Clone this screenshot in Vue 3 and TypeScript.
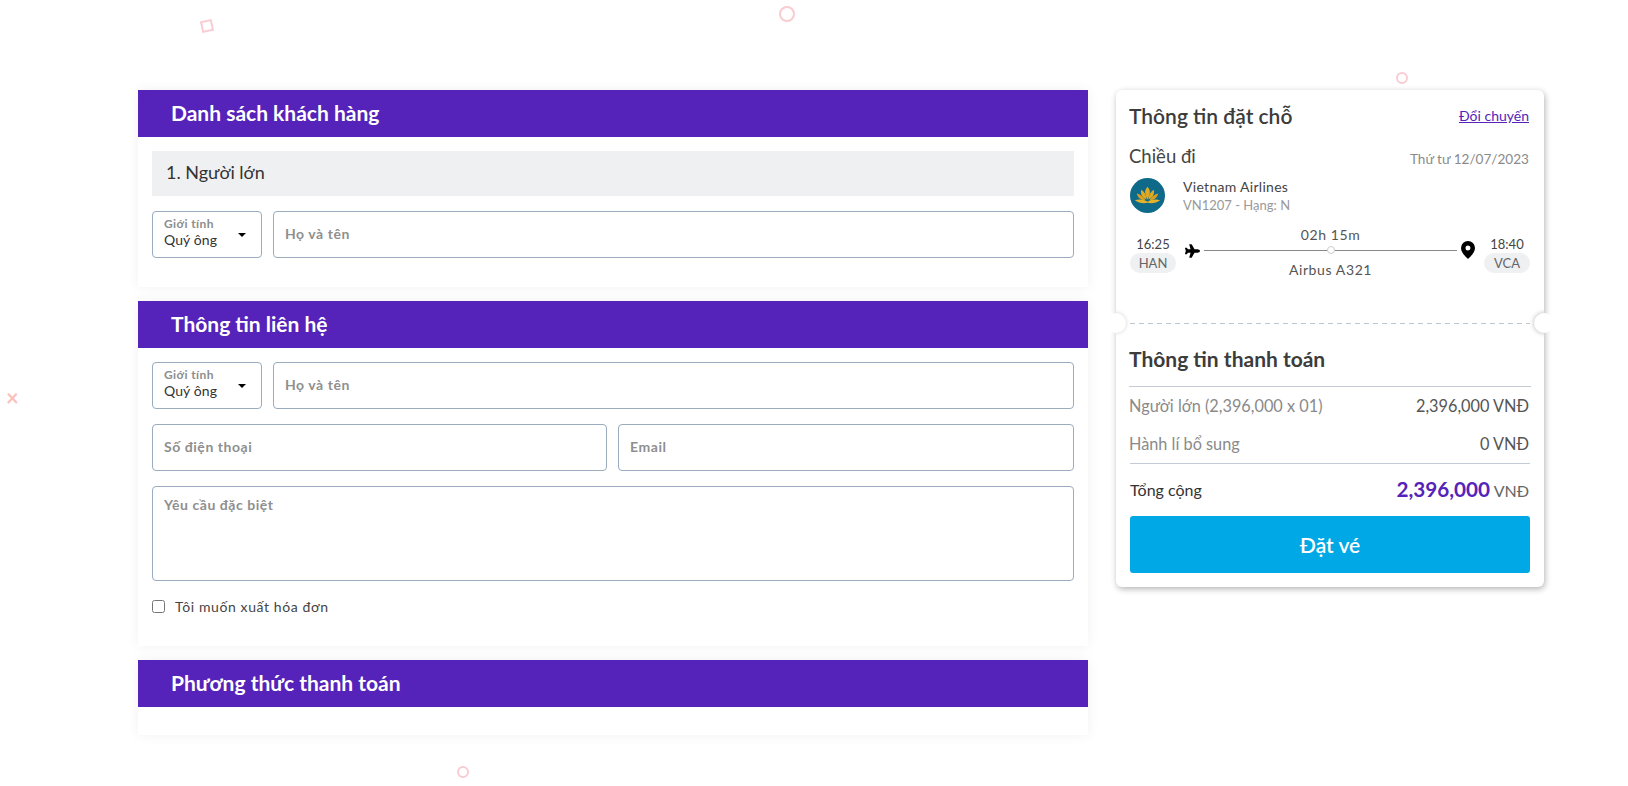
<script setup lang="ts">
type Shape = { kind: string; left: number; top: number };

const shapes: Shape[] = [
  { kind: "square", left: 201, top: 20 },
  { kind: "ring big", left: 779, top: 6 },
  { kind: "ring", left: 1396, top: 72 },
  { kind: "ring", left: 457, top: 766 },
];

const fees = [
  { label: "Người lớn (2,396,000 x 01)", value: "2,396,000 VNĐ" },
  { label: "Hành lí bổ sung", value: "0 VNĐ" },
];
</script>

<template>
  <div class="page">
    <span
      v-for="s in shapes"
      :key="s.left"
      class="shape"
      :class="s.kind"
      :style="{ left: s.left + 'px', top: s.top + 'px' }"
    ></span>
    <span class="shape cross">×</span>

    <main class="left">
      <section class="panel">
        <h2 class="panel-title">Danh sách khách hàng</h2>
        <div class="panel-body first">
          <div class="pax">1. Người lớn</div>
          <div class="row">
            <div class="select">
              <label>Giới tính</label>
              <span>Quý ông</span>
              <i class="caret"></i>
            </div>
            <input class="field grow" placeholder="Họ và tên" />
          </div>
        </div>
      </section>

      <section class="panel">
        <h2 class="panel-title">Thông tin liên hệ</h2>
        <div class="panel-body contact">
          <div class="row">
            <div class="select">
              <label>Giới tính</label>
              <span>Quý ông</span>
              <i class="caret"></i>
            </div>
            <input class="field grow" placeholder="Họ và tên" />
          </div>
          <div class="row">
            <input class="field half" placeholder="Số điện thoại" />
            <input class="field half" placeholder="Email" />
          </div>
          <textarea class="field note" placeholder="Yêu cầu đặc biệt"></textarea>
          <label class="invoice">
            <input type="checkbox" />
            <span>Tôi muốn xuất hóa đơn</span>
          </label>
        </div>
      </section>

      <section class="panel">
        <h2 class="panel-title">Phương thức thanh toán</h2>
        <div class="panel-body empty"></div>
      </section>
    </main>

    <aside class="ticket">
      <div class="ticket-top">
        <div class="between head">
          <h3>Thông tin đặt chỗ</h3>
          <a href="#">Đổi chuyến</a>
        </div>
        <div class="between way">
          <span class="way-name">Chiều đi</span>
          <span class="date">Thứ tư 12/07/2023</span>
        </div>
        <div class="airline">
          <svg class="logo" viewBox="0 0 36 36">
            <circle cx="18" cy="18" r="18" fill="#0f6a8a" />
            <path d="M18 9c3 3 3.500 7 0 13c-3.500-6-3-10 0-13z" fill="#e0a922" />
            <path d="M11.500 12c3 1.500 5 5 5.500 10c-4-1.500-6.500-5-5.500-10zM24.500 12c-3 1.500-5 5-5.500 10c4-1.500 6.500-5 5.500-10z" fill="#e0a922" />
            <path d="M7 16c3 .5 7 3 9 7c-4 .5-8-2.500-9-7zM29 16c-3 .5-7 3-9 7c4 .5 8-2.500 9-7z" fill="#d9a020" />
            <path d="M5 23c4-1.500 9-1 13 1.500c4-2.500 9-3 13-1.500c-4 3-9 3.500-13 2.500c-4 1-9 .5-13-2.500z" fill="#e6b32a" />
          </svg>
          <div>
            <div class="air-name">Vietnam Airlines</div>
            <div class="air-code">VN1207 - Hạng: N</div>
          </div>
        </div>
        <div class="route">
          <div class="stop">
            <span class="time">16:25</span>
            <span class="code">HAN</span>
          </div>
          <svg class="plane" viewBox="0 0 576 512">
            <path d="M480 192H365.710L260.610 8.060A16.014 16.014 0 0 0 246.710 0h-65.500c-10.630 0-18.300 10.170-15.380 20.390L214.860 192H112l-43.200-57.600c-3.020-4.030-7.770-6.400-12.800-6.400H16.010C5.600 128-2.040 137.780.490 147.880L32 256 .490 364.120C-2.040 374.220 5.600 384 16.010 384H56c5.040 0 9.780-2.370 12.800-6.400L112 320h102.860l-49.030 171.600c-2.920 10.220 4.750 20.400 15.380 20.400h65.500c5.740 0 11.040-3.080 13.890-8.060L365.710 320H480c35.350 0 96-28.650 96-64s-60.650-64-96-64z" />
          </svg>
          <div class="track">
            <span class="dur">02h 15m</span>
            <div class="line"><i></i></div>
            <span class="craft">Airbus A321</span>
          </div>
          <svg class="pin" viewBox="0 0 14 18">
            <path d="M7 0a7 7 0 0 0-7 7c0 4.500 5 9.200 7 11c2-1.800 7-6.500 7-11a7 7 0 0 0-7-7zm0 9.500a2.500 2.500 0 1 1 0-5a2.500 2.500 0 0 1 0 5z" />
          </svg>
          <div class="stop">
            <span class="time">18:40</span>
            <span class="code">VCA</span>
          </div>
        </div>
      </div>

      <div class="tear">
        <i class="notch l"></i>
        <i class="notch r"></i>
      </div>

      <div class="ticket-bottom">
        <h3 class="pay-title">Thông tin thanh toán</h3>
        <div class="fees">
          <div v-for="f in fees" :key="f.label" class="between fee">
            <span class="fee-label">{{ f.label }}</span>
            <span class="fee-value">{{ f.value }}</span>
          </div>
        </div>
        <div class="between total">
          <span class="total-label">Tổng cộng</span>
          <span class="total-value"><b>2,396,000</b> VNĐ</span>
        </div>
        <button class="book">Đặt vé</button>
      </div>
    </aside>
  </div>
</template>

<style scoped>
.page {
  position: relative;
  display: flex;
  align-items: flex-start;
  gap: 28px;
  height: 786px;
  box-sizing: border-box;
  padding: 90px 84px 0 138px;
  font-family: "Lato", "Noto Sans", sans-serif;
  color: #333;
  overflow: hidden;
}

.shape {
  position: absolute;
  box-sizing: border-box;
}
.square {
  width: 12px;
  height: 12px;
  border: 2px solid #f8ccd1;
  transform: rotate(-12deg);
}
.ring {
  width: 12px;
  height: 12px;
  border: 2.500px solid #f8ccd1;
  border-radius: 50%;
}
.big {
  width: 16px;
  height: 16px;
}
.cross {
  left: 6px;
  top: 388px;
  font-size: 22px;
  font-weight: 700;
  line-height: 20px;
  color: #f9c0bc;
}

.left {
  width: 950px;
  display: flex;
  flex-direction: column;
  gap: 14px;
}

.panel {
  background: #fff;
  box-shadow: 0 0 12px rgba(0, 0, 0, 0.06);
}
.panel-title {
  margin: 0;
  height: 47px;
  padding-left: 33px;
  background: #5523b9;
  color: #fff;
  font-size: 21px;
  font-weight: 700;
  line-height: 46px;
}
.panel-body {
  padding: 14px;
}
.first {
  height: 150px;
  box-sizing: border-box;
}
.contact {
  height: 298px;
  box-sizing: border-box;
}
.empty {
  height: 28px;
  padding: 0;
}

.pax {
  height: 45px;
  padding-left: 14px;
  margin-bottom: 15px;
  background: #eff0f2;
  font-size: 18px;
  line-height: 43px;
}
.row {
  display: flex;
  gap: 11px;
  margin-bottom: 15px;
}
.select {
  position: relative;
  width: 110px;
  height: 47px;
  box-sizing: border-box;
  flex: none;
  padding: 4px 11px;
  border: 1px solid #9aacbd;
  border-radius: 4px;
  background: #fff;
}
.select label {
  display: block;
  color: #8d8d8d;
  font-size: 12px;
  font-weight: 700;
  letter-spacing: 0.4px;
  line-height: 15px;
}
.select span {
  display: block;
  font-size: 14px;
  letter-spacing: 0.1px;
  line-height: 18px;
}
.caret {
  position: absolute;
  right: 15px;
  top: 21px;
  border: 4px solid transparent;
  border-top-color: #000;
  border-bottom-width: 0;
}
.field {
  height: 47px;
  box-sizing: border-box;
  padding: 0 11px 2px;
  border: 1px solid #9aacbd;
  border-radius: 4px;
  background: #fff;
  font-family: inherit;
  font-size: 14px;
  letter-spacing: 0.55px;
  outline: none;
}
.field::placeholder {
  color: #8f8f8f;
  font-weight: 700;
  opacity: 1;
}
.grow {
  flex: 1;
}
.half {
  flex: 1;
  width: 0;
}
.half:first-child {
  flex: none;
  width: 455px;
}
.note {
  display: block;
  width: 100%;
  height: 95px;
  padding-top: 9px;
  resize: none;
}
.invoice {
  display: flex;
  align-items: center;
  gap: 10px;
  margin-top: 17px;
  color: #444;
  font-size: 14px;
  letter-spacing: 0.6px;
}
.invoice input {
  width: 13px;
  height: 13px;
  margin: 0;
}

.ticket {
  width: 428px;
  flex: none;
  border-radius: 6px;
  background: #fff;
  box-shadow: 1px 2px 6px rgba(0, 0, 0, 0.3);
}
.ticket-top {
  height: 233px;
  box-sizing: border-box;
  padding: 12px 15px 0 13px;
}
.between {
  display: flex;
  justify-content: space-between;
  align-items: center;
}
.head h3 {
  margin: 0;
  color: #3c3c3c;
  font-size: 21px;
  font-weight: 600;
  line-height: 27px;
}
.head a {
  color: #5523b9;
  font-size: 14px;
}
.way {
  margin-top: 16px;
}
.way-name {
  color: #444;
  font-size: 18.500px;
}
.date {
  margin-top: 6px;
  color: #8a8a8a;
  font-size: 13.600px;
}
.airline {
  display: flex;
  align-items: center;
  gap: 18px;
  margin-top: 10px;
  margin-left: 1px;
}
.logo {
  width: 35px;
  height: 35px;
}
.air-name {
  color: #444;
  font-size: 14px;
  letter-spacing: 0.3px;
  line-height: 19px;
}
.air-code {
  color: #999;
  font-size: 13px;
  line-height: 18px;
}
.route {
  display: flex;
  align-items: center;
  margin: 12px -1px 0 1px;
}
.stop {
  display: flex;
  flex-direction: column;
  align-items: center;
  width: 46px;
  margin-top: 4px;
}
.time {
  color: #444;
  font-size: 13px;
  line-height: 18px;
}
.code {
  width: 100%;
  background: #eff0f2;
  border-radius: 10px;
  color: #666;
  font-size: 13px;
  line-height: 20px;
  text-align: center;
}
.plane {
  width: 15px;
  height: 14px;
  margin-left: 9px;
  margin-top: -2px;
}
.track {
  flex: 1;
  margin: 0 4px;
  display: flex;
  flex-direction: column;
  align-items: center;
  font-size: 14px;
  color: #555;
  letter-spacing: 0.6px;
}
.line {
  position: relative;
  width: 100%;
  height: 1px;
  margin: 7px 0 10px;
  background: #888;
}
.line i {
  position: absolute;
  left: 50%;
  top: -4px;
  width: 8px;
  height: 8px;
  margin-left: -4px;
  box-sizing: border-box;
  border: 1px solid #ccc;
  border-radius: 50%;
  background: #fff;
}
.pin {
  width: 14px;
  height: 18px;
  margin-right: 9px;
  margin-top: -4px;
}

.tear {
  position: relative;
  height: 1px;
  margin: 0 14px 9px;
  background: repeating-linear-gradient(90deg, #bcc6cf 0 5px, transparent 5px 9px);
}
.notch {
  position: absolute;
  top: -10px;
  width: 20px;
  height: 20px;
  border-radius: 50%;
  background: #fff;
}
.notch::before {
  content: "";
  position: absolute;
  inset: 0;
  border-radius: 50%;
}
.notch.l {
  left: -24px;
}
.notch.l::before {
  box-shadow: 0 0 4px rgba(0, 0, 0, 0.18);
  clip-path: inset(-6px -8px -6px 10px);
}
.notch.r {
  right: -24px;
}
.notch.r::before {
  box-shadow: 0 0 5px rgba(0, 0, 0, 0.3);
  clip-path: inset(-6px 10px -6px -8px);
}
.ticket-bottom {
  padding: 12px 14px 14px;
}
.pay-title {
  margin: 0 -1px 0 -1px;
  padding-bottom: 14px;
  border-bottom: 1px solid #c3ccd4;
  color: #3c3c3c;
  font-size: 21px;
  font-weight: 700;
  line-height: 27px;
}
.fees {
  margin-top: -1px;
  padding: 0 1px 1px 0;
  border-bottom: 1px solid #c3ccd4;
}
.fee {
  height: 38px;
  font-size: 16.300px;
  margin-left: -1px;
}
.fee-label {
  color: #8a8a8a;
}
.fee-value {
  color: #555;
}
.total {
  height: 52px;
  box-sizing: border-box;
  padding: 0 1px 2px 0;
  font-size: 16px;
}
.total-value {
  color: #666;
}
.total-value b {
  color: #5523b9;
  font-size: 20.700px;
  font-weight: 700;
}
.book {
  display: block;
  width: 100%;
  height: 57px;
  border: 0;
  border-radius: 3px;
  background: #00a8e6;
  color: #fff;
  font-family: inherit;
  font-size: 21px;
  font-weight: 600;
}
</style>
